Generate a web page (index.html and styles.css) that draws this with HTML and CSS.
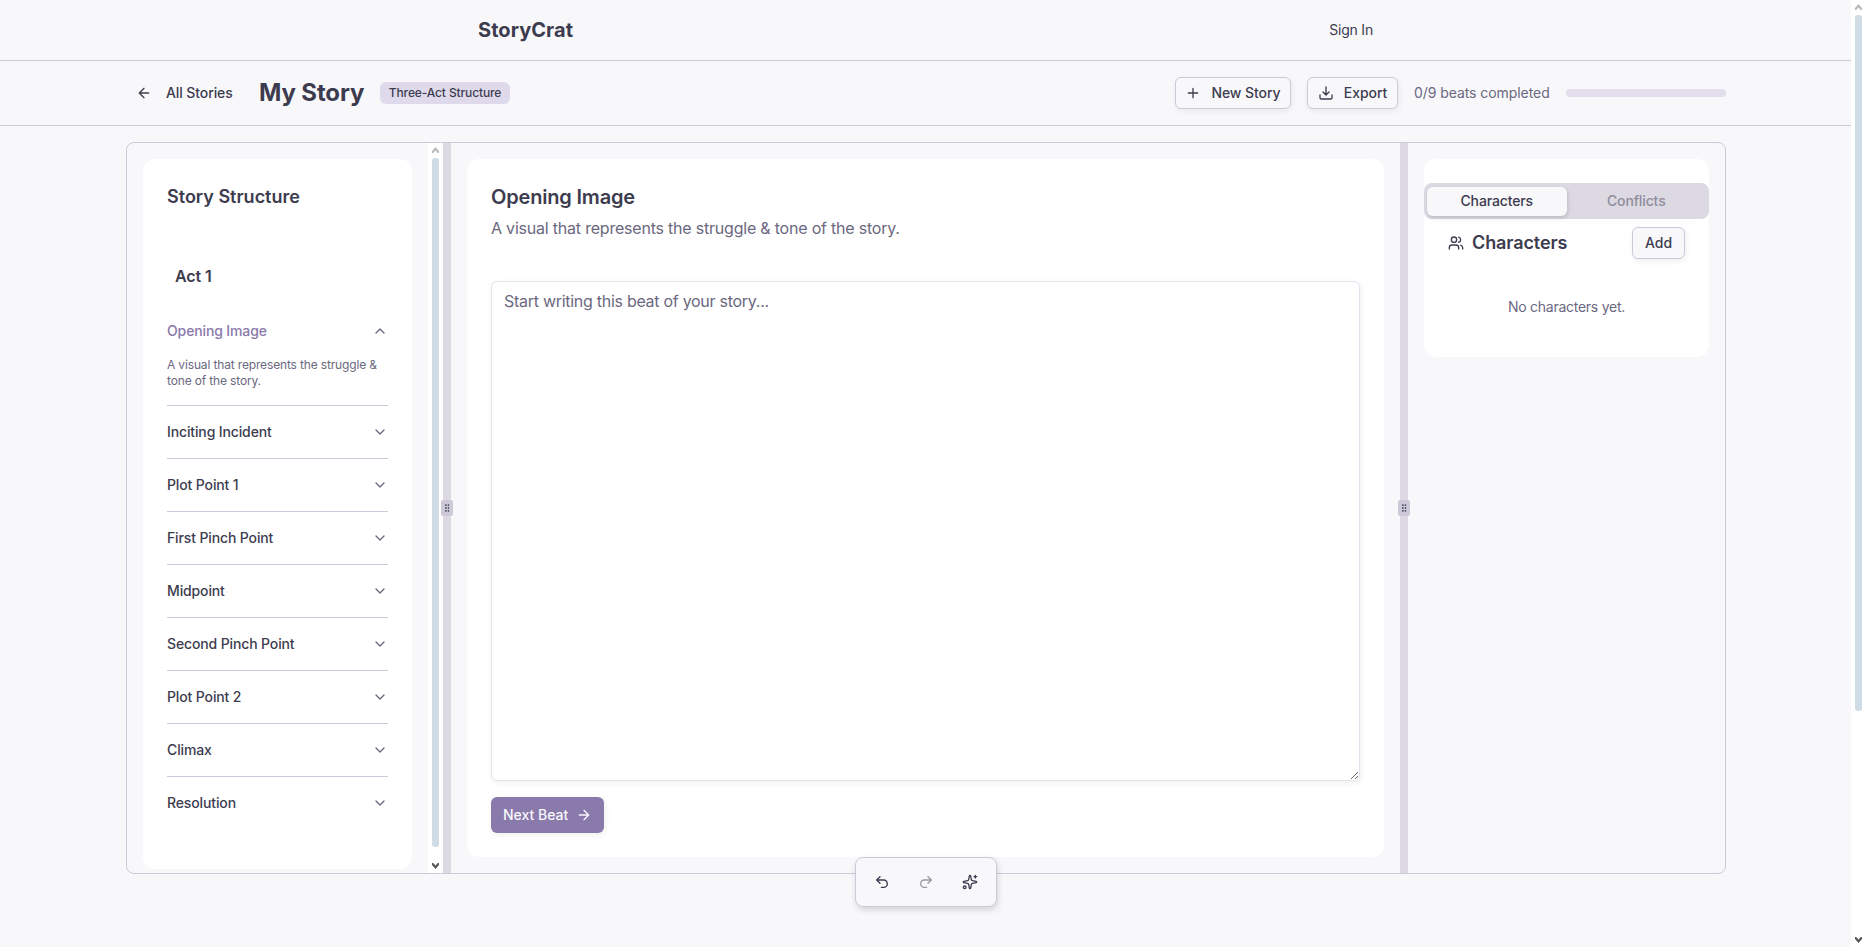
FILE: index.html
```html
<!DOCTYPE html>
<html lang="en">
<head>
<meta charset="utf-8">
<title>StoryCrat</title>
<link rel="stylesheet" href="styles.css">
</head>
<body>
<svg class="defs" aria-hidden="true">
  <symbol id="down" viewBox="0 0 24 24"><path d="m6 9 6 6 6-6"/></symbol>
  <symbol id="up" viewBox="0 0 24 24"><path d="m18 15-6-6-6 6"/></symbol>
  <symbol id="grip" viewBox="0 0 24 24"><circle cx="9" cy="12" r="1"/><circle cx="9" cy="5" r="1"/><circle cx="9" cy="19" r="1"/><circle cx="15" cy="12" r="1"/><circle cx="15" cy="5" r="1"/><circle cx="15" cy="19" r="1"/></symbol>
  <symbol id="sb-up" viewBox="0 0 7 6"><path d="M0 4 3.5 0 7 4V6H5.8L3.5 3.4 1.2 6H0Z"/></symbol>
  <symbol id="sb-down" viewBox="0 0 7 6"><path d="M0 2 3.5 6 7 2V0H5.8L3.5 2.6 1.2 0H0Z"/></symbol>
</svg>
<div class="page">
  <header class="site-header">
    <a class="logo">StoryCrat</a>
    <a class="sign-in">Sign In</a>
  </header>
  <div class="story-bar">
    <div class="bar-side">
      <a class="back"><svg class="icon"><path d="m12 19-7-7 7-7M19 12H5" transform="scale(.6667)"/></svg><span>All Stories</span></a>
      <h1>My Story</h1>
      <span class="badge">Three-Act Structure</span>
    </div>
    <div class="bar-side">
      <button class="btn new"><svg class="icon"><path d="M5 12h14M12 5v14" transform="scale(.6667)"/></svg><span>New Story</span></button>
      <button class="btn export"><svg class="icon"><path d="M12 3v12M7.500 10.500 12 15l4.500-4.500M3 15v4a2 2 0 0 0 2 2h14a2 2 0 0 0 2-2v-4" transform="scale(.6667)"/></svg><span>Export</span></button>
      <span class="count">0/9 beats completed</span>
      <div class="progress"></div>
    </div>
  </div>
  <main class="frame">
    <section class="panel-left">
      <div class="card structure">
        <h2>Story Structure</h2>
        <h3>Act 1</h3>
        <ul class="beats">
          <li class="open"><div class="beat"><span>Opening Image</span><svg class="icon chev"><use href="#up"/></svg></div><p>A visual that represents the struggle &amp;<br>tone of the story.</p></li>
          <li><div class="beat"><span>Inciting Incident</span><svg class="icon chev"><use href="#down"/></svg></div></li>
          <li><div class="beat"><span>Plot Point 1</span><svg class="icon chev"><use href="#down"/></svg></div></li>
          <li><div class="beat"><span>First Pinch Point</span><svg class="icon chev"><use href="#down"/></svg></div></li>
          <li><div class="beat"><span>Midpoint</span><svg class="icon chev"><use href="#down"/></svg></div></li>
          <li><div class="beat"><span>Second Pinch Point</span><svg class="icon chev"><use href="#down"/></svg></div></li>
          <li><div class="beat"><span>Plot Point 2</span><svg class="icon chev"><use href="#down"/></svg></div></li>
          <li><div class="beat"><span>Climax</span><svg class="icon chev"><use href="#down"/></svg></div></li>
          <li><div class="beat"><span>Resolution</span><svg class="icon chev"><use href="#down"/></svg></div></li>
        </ul>
      </div>
    </section>
    <div class="scrollbar inner"><svg class="sb up"><use href="#sb-up"/></svg><div class="thumb"></div><svg class="sb"><use href="#sb-down"/></svg></div>
    <div class="handle"><span class="grip"><svg class="icon"><use href="#grip"/></svg></span></div>
    <section class="panel-center">
      <div class="card editor">
        <h2>Opening Image</h2>
        <p class="lead">A visual that represents the struggle &amp; tone of the story.</p>
        <textarea placeholder="Start writing this beat of your story..."></textarea>
        <button class="next"><span>Next Beat</span><svg class="icon"><path d="M5 12h14M12 5l7 7-7 7" transform="scale(.6667)"/></svg></button>
      </div>
    </section>
    <div class="handle"><span class="grip"><svg class="icon"><use href="#grip"/></svg></span></div>
    <section class="panel-right">
      <div class="card people">
        <div class="tabs"><span class="tab active">Characters</span><span class="tab">Conflicts</span></div>
        <div class="people-head">
          <svg class="icon"><path d="M16 21v-2a4 4 0 0 0-4-4H6a4 4 0 0 0-4 4v2M13 7a4 4 0 1 1-8 0 4 4 0 0 1 8 0M22 21v-2a4 4 0 0 0-3-3.870M16 3.130a4 4 0 0 1 0 7.750" transform="scale(.6667)"/></svg>
          <h2>Characters</h2>
          <button class="btn add">Add</button>
        </div>
        <p class="empty">No characters yet.</p>
      </div>
    </section>
  </main>
</div>
<div class="scrollbar outer"><svg class="sb up"><use href="#sb-up"/></svg><div class="thumb"></div><svg class="sb"><use href="#sb-down"/></svg></div>
<div class="toolbar">
  <button><svg class="icon"><path d="M9 14 4 9l5-5M4 9h10.500a5.500 5.500 0 0 1 0 11H11" transform="scale(.6667)"/></svg></button>
  <button class="disabled"><svg class="icon"><path d="m15 14 5-5-5-5M20 9H9.500a5.500 5.500 0 0 0 0 11H13" transform="scale(.6667)"/></svg></button>
  <button><svg class="icon"><path d="M11.017 2.814a1 1 0 0 1 1.966 0l1.051 5.558a2 2 0 0 0 1.594 1.594l5.558 1.051a1 1 0 0 1 0 1.966l-5.558 1.051a2 2 0 0 0-1.594 1.594l-1.051 5.558a1 1 0 0 1-1.966 0l-1.051-5.558a2 2 0 0 0-1.594-1.594l-5.558-1.051a1 1 0 0 1 0-1.966l5.558-1.051a2 2 0 0 0 1.594-1.594zM20 2v4M22 4h-4M6 20a2 2 0 1 1-4 0 2 2 0 0 1 4 0" transform="scale(.6667)"/></svg></button>
</div>
</body>
</html>
```

FILE: styles.css
```css
* { box-sizing: border-box; margin: 0; padding: 0; }
body {
  height: 947px; display: flex; overflow: hidden;
  background: #f8f8fb; color: #3d3c4f;
  font: 400 14px/20px Inter, sans-serif;
}
.defs { position: absolute; width: 0; height: 0; }
button, textarea { font: inherit; color: inherit; }
.icon { width: 16px; height: 16px; flex: none; fill: none; stroke: currentColor; stroke-width: 2; stroke-linecap: round; stroke-linejoin: round; overflow: visible; }
.page { flex: 1; min-width: 0; }

.site-header {
  height: 61px; padding: 0 478px; border-bottom: 1px solid #cec9d9;
  display: flex; align-items: center; justify-content: space-between;
}
.logo { font-size: 20px; font-weight: 700; line-height: 28px; letter-spacing: .05px; }
.sign-in { letter-spacing: -.2px; }

.story-bar {
  height: 65px; padding: 0 125px 0 126px; border-bottom: 1px solid #cec9d9;
  display: flex; align-items: center; justify-content: space-between;
}
.bar-side { display: flex; align-items: center; gap: 16px; }
.back { display: flex; align-items: center; gap: 14px; padding-left: 10px; width: 117px; font-weight: 500; white-space: nowrap; letter-spacing: -.1px; }
h1 { width: 105px; font-size: 24px; line-height: 32px; font-weight: 700; white-space: nowrap; letter-spacing: -.13px; }
.badge { width: 130px; height: 22px; border-radius: 6px; background: #dfd9ec; font-size: 12px; font-weight: 500; line-height: 22px; text-align: center; white-space: nowrap; letter-spacing: -.12px; }
.btn {
  display: flex; align-items: center; justify-content: center; height: 32px;
  border: 1px solid #cec9d9; border-radius: 6px; background: #f8f8fb;
  font-weight: 500; white-space: nowrap; box-shadow: 1px 2px 5px 1px rgba(0,0,0,.05);
}
.new { width: 116px; gap: 10px; letter-spacing: -.06px; }
.export { width: 91px; gap: 10px; letter-spacing: -.06px; }
.count { width: 136px; color: #6b6880; white-space: nowrap; letter-spacing: -.07px; }
.progress { width: 160px; height: 8px; border-radius: 4px; background: #e2deeb; }

.frame {
  display: flex; width: 1600px; height: 732px; margin: 16px auto 0 126px; overflow: hidden;
  border: 1px solid #cec9d9; border-radius: 8px;
}
.card { background: #fff; border-radius: 12px; }
h2 { font-size: 20px; font-weight: 600; line-height: 28px; white-space: nowrap; letter-spacing: -.18px; }
.panel-left { width: 301px; padding: 16px; }
.structure { height: 710px; padding: 24px; }
.structure h2 { font-size: 18px; letter-spacing: 0; }
h3 { margin-top: 51px; padding-left: 8px; font-size: 16px; font-weight: 600; line-height: 28px; letter-spacing: -.1px; }
.beats { margin-top: 15px; list-style: none; }
.beats li { border-bottom: 1px solid #cec9d9; font-weight: 500; letter-spacing: -.13px; }
.beats li:last-child { border: 0; }
.beat { height: 52px; display: flex; align-items: center; justify-content: space-between; }
.chev { color: #6b6880; }
.beats p { padding-bottom: 16px; font-size: 12px; font-weight: 400; line-height: 16px; color: #6b6880; white-space: nowrap; letter-spacing: -.15px; }
.open .beat span { color: #8a79ab; }

.scrollbar { width: 15px; flex: none; display: flex; flex-direction: column; align-items: center; background: #fff; }
.thumb { width: 7px; border-radius: 3px; background: #d0dce5; }
.sb { width: 7px; height: 6px; fill: #585858; }
.sb.up { fill: #bbb; margin: 4px 0 5px; }
.inner .thumb { height: 689px; margin-bottom: 16px; }
.outer .thumb { height: 696px; margin-bottom: 226px; }

.handle { width: 8px; flex: none; background: #dcd9e3; display: flex; align-items: center; justify-content: center; }
.grip { width: 12px; height: 16px; flex: none; border-radius: 2px; background: #cec9d9; display: flex; align-items: center; justify-content: center; position: relative; z-index: 1; }
.grip .icon { width: 10px; height: 10px; }

.panel-center { width: 949px; padding: 16px; }
.editor { height: 698px; padding: 24px; }
.lead { margin-top: 5px; font-size: 16px; line-height: 24px; color: #6b6880; letter-spacing: -.21px; }
textarea {
  display: block; width: 869px; height: 500px; margin-top: 41px; padding: 7px 12px; resize: vertical;
  border: 1px solid #e5e4ee; border-radius: 6px; background: #fff; font-size: 16px; line-height: 24px; letter-spacing: -.28px;
  box-shadow: 1px 2px 5px 1px rgba(0,0,0,.05); outline: none;
}
textarea::placeholder { color: #6b6880; opacity: 1; }
.next {
  display: flex; align-items: center; gap: 8px; width: 113px; height: 36px; margin-top: 16px; padding-left: 12px;
  border: 0; border-radius: 6px; background: #8a79ab; color: #f8f8fb; font-weight: 500; white-space: nowrap;
  box-shadow: 1px 2px 5px 1px rgba(0,0,0,.05);
}

.panel-right { width: 317px; padding: 16px; }
.people { height: 198px; padding-top: 24px; }
.tabs { height: 36px; padding: 4px 3px 3px; display: flex; border-radius: 8px; background: #dcd9e3; }
.tab { flex: 1; line-height: 28px; text-align: center; font-weight: 500; border-radius: 6px; color: #8f8c9c; letter-spacing: -.13px; }
.tab.active { background: #f8f8fb; color: #3d3c4f; box-shadow: 1px 2px 4px rgba(0,0,0,.14); }
.people-head { display: flex; align-items: center; gap: 8px; padding: 8px 24px 0; }
.people-head h2 { font-size: 18px; letter-spacing: -.1px; }
.add { width: 53px; margin-left: auto; }
.empty { margin-top: 38px; text-align: center; color: #6b6880; letter-spacing: -.26px; }

.toolbar {
  position: absolute; left: 855px; top: 857px; display: flex; gap: 8px; padding: 8px;
  border: 1px solid #cec9d9; border-radius: 8px; background: #f8f8fb; box-shadow: 1px 3px 6px rgba(0,0,0,.14);
}
.toolbar button { width: 36px; height: 32px; display: flex; align-items: center; justify-content: center; border: 0; background: none; }
.toolbar .disabled { opacity: .5; }
```
